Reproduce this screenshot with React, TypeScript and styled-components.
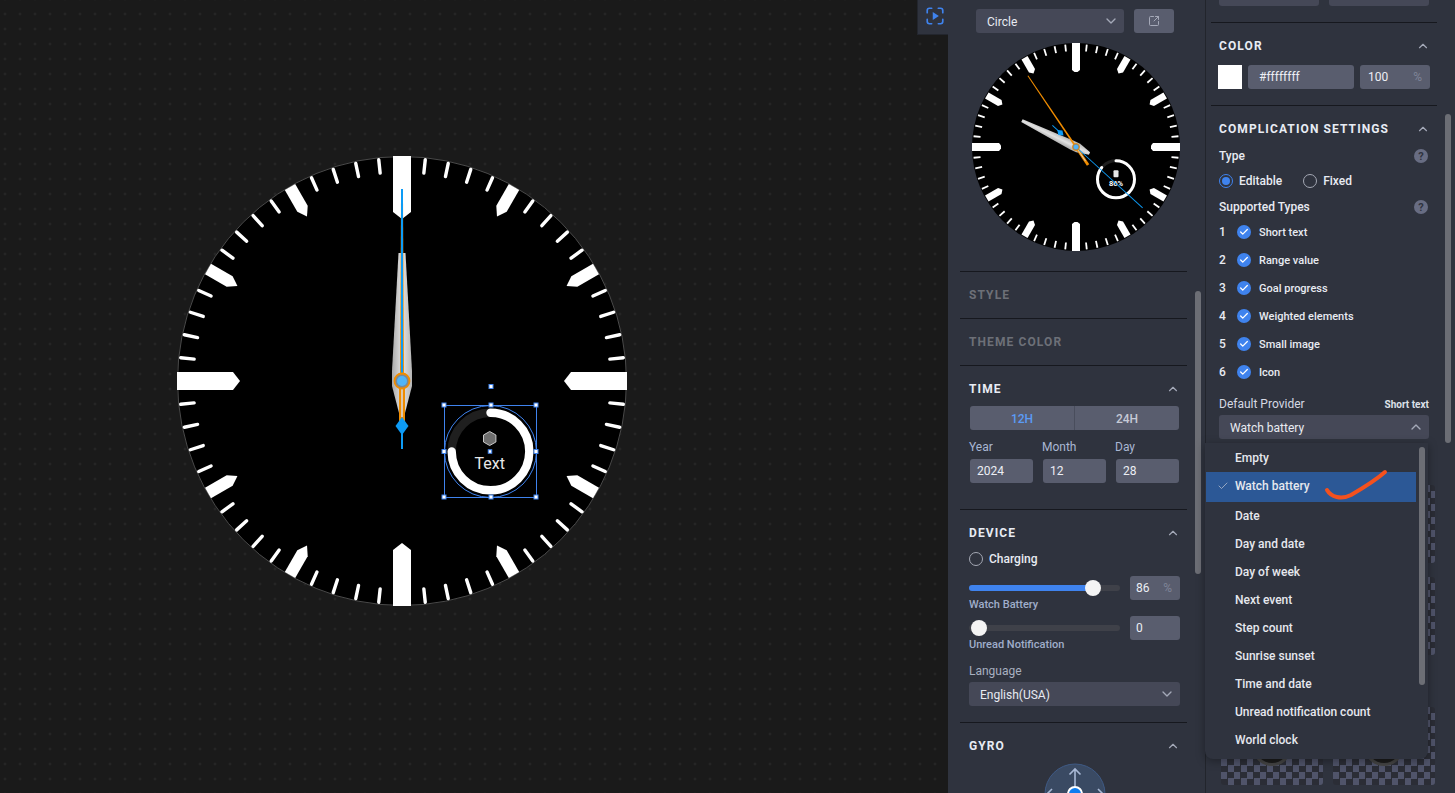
import React from "react";
import styled, { createGlobalStyle } from "styled-components";
import { Check, ChevronDown, ChevronUp, SquareArrowOutUpRight } from "lucide-react";

const PANEL = "#2f333e";
const LINE = "#16181e";
const FIELD = "#595d6e";
const SELECT = "#454857";
const BLUE = "#3f83ee";

const GlobalStyle = createGlobalStyle`
    html, body {
        margin: 0;
        padding: 0;
        background: #1a1a1a;
    }
    * {
        box-sizing: border-box;
    }
`;

const Page = styled.div`
    display: flex;
    width: 1455px;
    height: 793px;
    overflow: hidden;
    font-family: Roboto, "Liberation Sans", sans-serif;
    font-size: 12px;
    color: #e8ebf2;
`;

const Canvas = styled.main`
    position: relative;
    flex: 0 0 948px;
    padding: 155px 0 0 176px;
    background-color: #1a1a1a;
    background-image: radial-gradient(circle, #2d2d2d 0.9px, transparent 1.2px);
    background-size: 15px 15px;
    background-position: -2.5px 6.5px;
`;

const PlayTab = styled.div`
    position: absolute;
    top: 0;
    right: 0;
    display: flex;
    align-items: center;
    justify-content: center;
    width: 31px;
    height: 35px;
    padding: 0 0 3px 3px;
    background: ${PANEL};
    border-left: 1px solid #23262e;
    border-bottom: 1px solid #23262e;
`;

const Panel = styled.aside<{ $width: number; $border?: boolean }>`
    position: relative;
    flex: 0 0 ${(p) => p.$width}px;
    height: 793px;
    background: ${PANEL};
    border-right: ${(p) => (p.$border ? "1px solid #22252c" : "none")};
`;

const ScrollThumb = styled.div<{ $left: number; $top: number; $height: number }>`
    position: absolute;
    left: ${(p) => p.$left}px;
    top: ${(p) => p.$top}px;
    width: 6px;
    height: ${(p) => p.$height}px;
    border-radius: 3px;
    background: #6c6e75;
`;

const PresetRow = styled.div`
    display: flex;
    gap: 10px;
    padding: 9px 0 0 28px;
`;

const Select = styled.div<{ $width: number; $inset?: number }>`
    display: flex;
    align-items: center;
    justify-content: space-between;
    width: ${(p) => p.$width}px;
    height: 24px;
    padding: 2px 5px 0 ${(p) => p.$inset ?? 11}px;
    border-radius: 3px;
    background: ${SELECT};
    color: #e8ebf2;
    svg {
        margin-top: -2px;
    }
`;

const IconButton = styled.div`
    display: flex;
    align-items: center;
    justify-content: center;
    width: 40px;
    height: 24px;
    border-radius: 3px;
    background: ${FIELD};
    color: #a5a9b8;
`;

const DialSvg = styled.svg<{ $size: number }>`
    display: block;
    width: ${(p) => p.$size}px;
    height: ${(p) => p.$size}px;
`;

const PreviewSlot = styled.div`
    margin: 9px 0 19px 23px;
`;

const Section = styled.section<{ $left: number; $right: number; $inner?: number; $bottom?: number }>`
    margin: 0 ${(p) => p.$right}px 0 ${(p) => p.$left}px;
    padding: 13px 7px ${(p) => p.$bottom ?? 15}px ${(p) => p.$inner ?? 9}px;
    border-top: 1px solid ${LINE};
`;

const SectionHead = styled.header<{ $muted?: boolean }>`
    display: flex;
    align-items: center;
    justify-content: space-between;
    height: 18px;
    padding-top: 2px;
    font-weight: 700;
    letter-spacing: 1.1px;
    color: ${(p) => (p.$muted ? "#6d7078" : "#e8ecf4")};
    svg {
        color: #a4a9b8;
    }
`;

const Segments = styled.div`
    display: flex;
    width: 209px;
    height: 24px;
    margin: 9px 0 0 1px;
    border-radius: 3px;
    overflow: hidden;
    background: ${FIELD};
`;

const Segment = styled.div<{ $active?: boolean }>`
    flex: 1;
    display: flex;
    align-items: center;
    justify-content: center;
    padding-top: 2px;
    font-weight: 500;
    color: ${(p) => (p.$active ? "#5b9bf5" : "#c6cad6")};
    & + & {
        border-left: 1px solid #494d5c;
    }
`;

const DateGrid = styled.div`
    display: grid;
    grid-template-columns: repeat(3, 63px);
    column-gap: 10px;
    margin: 8px 0 11px 1px;
`;

const FieldLabel = styled.label`
    display: block;
    height: 16px;
    margin: 1px 0 4px -1px;
    line-height: 16px;
    color: #a9b7d3;
`;

const Field = styled.div<{ $width?: number; $inset?: number }>`
    display: flex;
    align-items: center;
    justify-content: space-between;
    width: ${(p) => (p.$width ? `${p.$width}px` : "100%")};
    height: 24px;
    padding: 0 8px 0 ${(p) => p.$inset ?? 6}px;
    border-radius: 3px;
    background: ${FIELD};
    color: #eceef4;
`;

const Unit = styled.span`
    color: #7f8498;
`;

const RadioRow = styled.div<{ $top: number }>`
    display: flex;
    align-items: center;
    height: 18px;
    margin-top: ${(p) => p.$top}px;
`;

const Radio = styled.span<{ $on?: boolean; $left?: number }>`
    position: relative;
    flex: none;
    width: 14px;
    height: 14px;
    margin: 0 6px 0 ${(p) => p.$left ?? 0}px;
    border: 1px solid ${(p) => (p.$on ? BLUE : "#a4a8b4")};
    border-radius: 50%;
    &::after {
        content: "";
        display: ${(p) => (p.$on ? "block" : "none")};
        position: absolute;
        inset: 2px;
        border-radius: 50%;
        background: ${BLUE};
    }
`;

const StrongText = styled.span`
    font-weight: 500;
    color: #e8ebf2;
`;

const SliderRow = styled.div<{ $top: number }>`
    display: flex;
    justify-content: space-between;
    height: 40px;
    margin-top: ${(p) => p.$top}px;
`;

const SliderColumn = styled.div`
    width: 151px;
`;

const SliderTrack = styled.div`
    position: relative;
    height: 6px;
    margin: 9px 0 0;
    border-radius: 3px;
    background: #3f4149;
`;

const SliderFill = styled.div`
    height: 100%;
    border-radius: 3px;
    background: ${BLUE};
`;

const SliderThumb = styled.span`
    position: absolute;
    top: -5px;
    width: 16px;
    height: 16px;
    margin-left: -8px;
    border-radius: 50%;
    background: #f4f4f4;
`;

const SliderLabel = styled.div`
    height: 12px;
    margin-top: 8px;
    font-size: 11px;
    line-height: 12px;
    font-weight: 500;
    color: #a0aecb;
`;

const PlainLabel = styled.div<{ $top: number; $bottom: number }>`
    height: 16px;
    margin: ${(p) => p.$top}px 0 ${(p) => p.$bottom}px;
    line-height: 16px;
    color: #a8b0c0;
`;

const GyroSlot = styled.div`
    display: flex;
    justify-content: center;
    margin-top: 9px;
`;

const TopStubs = styled.div`
    display: flex;
    gap: 10px;
    height: 22px;
    padding-left: 13px;
`;

const Stub = styled.div`
    width: 100px;
    height: 6px;
    border-radius: 0 0 3px 3px;
    background: ${SELECT};
`;

const ColorRow = styled.div`
    display: flex;
    gap: 6px;
    margin: 11px 0 0 -1px;
`;

const Swatch = styled.div`
    width: 24px;
    height: 24px;
    background: #fff;
`;

const TitleRow = styled.div<{ $top: number }>`
    display: flex;
    align-items: center;
    justify-content: space-between;
    height: 18px;
    margin-top: ${(p) => p.$top}px;
    padding-right: 2px;
`;

const Help = styled.span`
    display: flex;
    align-items: center;
    justify-content: center;
    width: 14px;
    height: 14px;
    border-radius: 50%;
    background: #686d83;
    color: #2f333e;
    font-size: 11px;
    font-weight: 700;
`;

const TypeList = styled.ul`
    margin: 2px 0 0;
    padding: 0;
    list-style: none;
`;

const TypeRow = styled.li`
    display: flex;
    align-items: center;
    height: 28px;
    font-size: 11px;
    font-weight: 500;
`;

const TypeIndex = styled.span`
    width: 18px;
    font-size: 12px;
`;

const CheckDot = styled.span`
    display: flex;
    align-items: center;
    justify-content: center;
    width: 14px;
    height: 14px;
    margin-right: 8px;
    border-radius: 50%;
    background: ${BLUE};
    color: #fff;
`;

const ProviderHead = styled.div`
    display: flex;
    align-items: center;
    justify-content: space-between;
    height: 16px;
    margin: 10px 0 3px;
    padding-right: 1px;
    color: #d5d9e3;
`;

const ProviderHint = styled.span`
    font-size: 10px;
    font-weight: 700;
    color: #dde0e8;
`;

const ThumbRow = styled.div<{ $top: number }>`
    display: grid;
    grid-template-columns: repeat(2, 102px);
    column-gap: 10px;
    margin: ${(p) => p.$top}px 0 0 15px;
`;

const Thumb = styled.div`
    display: flex;
    align-items: center;
    justify-content: center;
    height: 78px;
    border-radius: 3px;
    background: repeating-conic-gradient(#2b2d36 0 25%, #50546a 0 50%) 0 0 / 13px 13px;
`;

const ThumbDial = styled.div`
    width: 40px;
    height: 40px;
    border-radius: 50%;
    background: #1c1c1c;
    border: 3px solid #454545;
`;

const Menu = styled.div`
    position: absolute;
    left: -1px;
    top: 443px;
    width: 223px;
    padding: 0 0 6px 1px;
    border-radius: 0 0 8px 8px;
    background: ${PANEL};
    box-shadow: 0 2px 10px rgba(0, 0, 0, 0.35);
`;

const MenuItem = styled.div<{ $selected?: boolean }>`
    display: flex;
    align-items: center;
    gap: 6px;
    width: 210px;
    height: ${(p) => (p.$selected ? 30 : 28)}px;
    margin: ${(p) => (p.$selected ? "1px 0 -1px" : "0")};
    padding: ${(p) => (p.$selected ? "0 0 2px 11px" : "2px 0 0 29px")};
    background: ${(p) => (p.$selected ? "#2c5896" : "transparent")};
    font-weight: 500;
    color: #e6e8ee;
    svg {
        color: #b8c0d0;
    }
`;

const Scribble = styled.svg`
    position: absolute;
    left: 100px;
    top: 20px;
    width: 90px;
    height: 45px;
`;

const HOURS = [0, 30, 60, 90, 120, 150, 180, 210, 240, 270, 300, 330];
const MINUTES = Array.from({ length: 60 }, (_, i) => i * 6).filter((a) => a % 30 !== 0);

const Hands: React.FC<{
    c: number;
    scale: number;
    hour: number;
    minute: number;
    second: number;
    id: string;
}> = ({ c, scale, hour, minute, second, id }) => (
    <g transform={`translate(${c} ${c}) scale(${scale})`}>
        <defs>
            <linearGradient id={id} x1="0" x2="1" y1="0" y2="0">
                <stop offset="0" stopColor="#a9a9a9" />
                <stop offset="0.5" stopColor="#e2e2e2" />
                <stop offset="1" stopColor="#b5b5b5" />
            </linearGradient>
        </defs>
        <polygon
            transform={`rotate(${hour})`}
            points="-3.5,-128 3.5,-128 10,-10 10,5 3,32 -3,32 -10,5 -10,-10"
            fill={`url(#${id})`}
        />
        <g transform={`rotate(${minute})`}>
            <polygon points="-1,-183 1,-183 2,0 -2,0" fill="#f08c00" />
            <rect x="-3" y="0" width="6" height="46" fill="#f08c00" />
        </g>
        <g transform={`rotate(${second})`}>
            <rect x="-1" y="-192" width="2" height="192" fill="#0d9bf5" />
            <rect x="-1" y="38" width="2" height="30" fill="#0d9bf5" />
            <polygon points="0,36 6.5,45 0,54 -6.5,45" fill="#0d9bf5" />
        </g>
        <rect transform={`rotate(${minute})`} x="-0.8" y="6" width="1.6" height="30" fill="#d8d8d8" />
        <circle r="7.5" fill="#7d8890" stroke="#f08c00" strokeWidth="1.8" />
        <circle r="5" fill="#4fb4f8" />
    </g>
);

const Ring: React.FC<{
    x: number;
    y: number;
    r: number;
    width: number;
    percent: number;
}> = ({ x, y, r, width, percent }) => (
    <g transform={`rotate(-90 ${x} ${y})`}>
        <circle cx={x} cy={y} r={r} fill="none" stroke="#1f1f1f" strokeWidth={width} />
        <circle
            cx={x}
            cy={y}
            r={r}
            fill="none"
            stroke="#fff"
            strokeWidth={width}
            strokeLinecap="round"
            pathLength={100}
            strokeDasharray={`${percent} 100`}
        />
    </g>
);

const Handle: React.FC<{ x: number; y: number; size?: number }> = ({ x, y, size = 4 }) => (
    <rect x={x - size / 2} y={y - size / 2} width={size} height={size} fill="#fff" stroke={BLUE} strokeWidth="1" />
);

const MainDial = () => {
    const c = 226;
    const cx = c + 88.5;
    const cy = c + 70.5;
    const half = 46;
    const hx = cx - 0.8;
    return (
        <DialSvg $size={452} viewBox="0 0 452 452">
            <circle cx={c} cy={c} r={224.5} fill="#000" stroke="#4a4a4a" strokeWidth="1" />
            {MINUTES.map((a) => (
                <line
                    key={a}
                    transform={`rotate(${a} ${c} ${c})`}
                    x1={c}
                    x2={c}
                    y1={c - 222.5}
                    y2={c - 209}
                    stroke="#fff"
                    strokeWidth="3.4"
                    strokeLinecap="round"
                />
            ))}
            {HOURS.map((a) =>
                a % 90 === 0 ? (
                    <polygon
                        key={a}
                        transform={`rotate(${a} ${c} ${c})`}
                        points={`${c - 9},${c - 225} ${c + 9},${c - 225} ${c + 9},${c - 169} ${c},${c - 162} ${c - 9},${c - 169}`}
                        fill="#fff"
                    />
                ) : (
                    <polygon
                        key={a}
                        transform={`rotate(${a} ${c} ${c})`}
                        points={`${c - 6},${c - 224} ${c + 6},${c - 224} ${c + 6},${c - 199} ${c},${c - 190} ${c - 6},${c - 199}`}
                        fill="#fff"
                    />
                )
            )}
            <Hands c={c} scale={1} hour={0} minute={0} second={0} id="main-hand" />
            <Ring x={cx} y={cy} r={38.8} width={8.4} percent={75} />
            <polygon
                points={`${hx},${cy - 20} ${hx + 6.2},${cy - 16.5} ${hx + 6.2},${cy - 9.5} ${hx},${cy - 6} ${hx - 6.2},${cy - 9.5} ${hx - 6.2},${cy - 16.5}`}
                fill="#6e6e6e"
                stroke="#c9c9c9"
            />
            <text x={hx} y={cy + 17.5} textAnchor="middle" fontSize="16" fill="#e8e8e8" fontFamily="Roboto, sans-serif">
                Text
            </text>
            <circle cx={cx} cy={cy} r={half} fill="none" stroke={BLUE} strokeWidth="1" />
            <rect x={cx - half} y={cy - half} width={half * 2} height={half * 2} fill="none" stroke={BLUE} strokeWidth="1" />
            <Handle x={cx - half - 0.5} y={cy - half - 0.5} />
            <Handle x={cx + 0.5} y={cy - half - 0.5} />
            <Handle x={cx + half - 0.5} y={cy - half - 0.5} />
            <Handle x={cx - half - 0.5} y={cy} />
            <Handle x={cx + half - 0.5} y={cy} />
            <Handle x={cx - half - 0.5} y={cy + half - 0.5} />
            <Handle x={cx + 0.5} y={cy + half - 0.5} />
            <Handle x={cx + half - 0.5} y={cy + half - 0.5} />
            <Handle x={cx + 0.5} y={cy - 65} />
            <Handle x={cx - 0.5} y={cy} size={3.5} />
        </DialSvg>
    );
};

const PreviewDial = () => {
    const c = 105;
    const cx = c + 40;
    const cy = c + 32.3;
    return (
        <DialSvg $size={210} viewBox="0 0 210 210">
            <circle cx={c} cy={c} r={104} fill="#000" />
            {MINUTES.map((a) => (
                <line
                    key={a}
                    transform={`rotate(${a} ${c} ${c})`}
                    x1={c}
                    x2={c}
                    y1={c - 103}
                    y2={c - 96}
                    stroke="#fff"
                    strokeWidth="1.8"
                />
            ))}
            {HOURS.map((a) =>
                a % 90 === 0 ? (
                    <polygon
                        key={a}
                        transform={`rotate(${a} ${c} ${c})`}
                        points={`${c - 4},${c - 104} ${c + 4},${c - 104} ${c + 4},${c - 77} ${c + 1.5},${c - 75} ${c - 1.5},${c - 75} ${c - 4},${c - 77}`}
                        fill="#fff"
                    />
                ) : (
                    <polygon
                        key={a}
                        transform={`rotate(${a} ${c} ${c})`}
                        points={`${c - 3.5},${c - 103} ${c + 3.5},${c - 103} ${c + 3.5},${c - 88} ${c},${c - 85} ${c - 3.5},${c - 88}`}
                        fill="#fff"
                    />
                )
            )}
            <Ring x={cx} y={cy} r={18.5} width={3} percent={86} />
            <rect x={cx - 2.5} y={cy - 9} width={5} height={7} rx={1} fill="#e8e8e8" />
            <text x={cx} y={cy + 7} textAnchor="middle" fontSize="7.5" fontWeight="700" fill="#fff" fontFamily="Roboto, sans-serif">
                86%
            </text>
            <Hands c={c} scale={0.47} hour={-64} minute={-34} second={132.4} id="preview-hand" />
        </DialSvg>
    );
};

const PlayIcon = () => (
    <svg width="20" height="20" viewBox="0 0 18 18" fill="none" stroke={BLUE} strokeWidth="1.5" strokeLinecap="round">
        <path d="M2 6V4a2 2 0 0 1 2-2h2M12 2h2a2 2 0 0 1 2 2v2M16 12v2a2 2 0 0 1-2 2h-2M6 16H4a2 2 0 0 1-2-2v-2" />
        <path d="M7 5.5v7l5.5-3.5z" fill={BLUE} stroke="none" />
    </svg>
);

const GyroIcon = () => (
    <svg width="62" height="62" viewBox="0 0 62 62" fill="none">
        <circle cx="31" cy="31" r="30" fill="#3a4a63" stroke="#3f5a85" />
        <g stroke="#a9b9d6" strokeWidth="1.6">
            <path d="M31 23V6M25.5 11.5 31 6l5.5 5.5" />
            <path d="M14 31H3M8 26l-5 5 5 5" />
            <path d="M48 31h11M54 26l5 5-5 5" />
        </g>
        <circle cx="31" cy="31" r="7" fill="#0d7df0" stroke="#fff" strokeWidth="2" />
    </svg>
);

const HEADER_CHEVRON = <ChevronUp size={14} strokeWidth={2} />;

const Head: React.FC<{ title: string; muted?: boolean }> = ({ title, muted }) => (
    <SectionHead $muted={muted}>
        {title}
        {!muted && HEADER_CHEVRON}
    </SectionHead>
);

const SUPPORTED = ["Short text", "Range value", "Goal progress", "Weighted elements", "Small image", "Icon"];
const PROVIDERS = [
    "Empty",
    "Watch battery",
    "Date",
    "Day and date",
    "Day of week",
    "Next event",
    "Step count",
    "Sunrise sunset",
    "Time and date",
    "Unread notification count",
    "World clock",
];
const DATE_PARTS = [
    ["Year", "2024"],
    ["Month", "12"],
    ["Day", "28"],
];

const LeftPanel = () => (
    <Panel $width={258} $border>
        <PresetRow>
            <Select $width={148}>
                Circle
                <ChevronDown size={16} color="#a4a9b8" />
            </Select>
            <IconButton>
                <SquareArrowOutUpRight size={12} />
            </IconButton>
        </PresetRow>
        <PreviewSlot>
            <PreviewDial />
        </PreviewSlot>
        <Section $left={12} $right={18}>
            <Head title="STYLE" muted />
        </Section>
        <Section $left={12} $right={18}>
            <Head title="THEME COLOR" muted />
        </Section>
        <Section $left={12} $right={18} $bottom={15}>
            <Head title="TIME" />
            <Segments>
                <Segment $active>12H</Segment>
                <Segment>24H</Segment>
            </Segments>
            <DateGrid>
                {DATE_PARTS.map(([label, value]) => (
                    <div key={label}>
                        <FieldLabel>{label}</FieldLabel>
                        <Field $inset={7}>{value}</Field>
                    </div>
                ))}
            </DateGrid>
        </Section>
        <Section $left={12} $right={18} $bottom={16}>
            <Head title="DEVICE" />
            <RadioRow $top={9}>
                <Radio />
                <StrongText>Charging</StrongText>
            </RadioRow>
            <SliderRow $top={8}>
                <SliderColumn>
                    <SliderTrack>
                        <SliderFill style={{ width: "82%" }} />
                        <SliderThumb style={{ left: "82%" }} />
                    </SliderTrack>
                    <SliderLabel>Watch Battery</SliderLabel>
                </SliderColumn>
                <Field $width={50}>
                    86
                    <Unit>%</Unit>
                </Field>
            </SliderRow>
            <SliderRow $top={0}>
                <SliderColumn>
                    <SliderTrack>
                        <SliderThumb style={{ left: "6.6%" }} />
                    </SliderTrack>
                    <SliderLabel>Unread Notification</SliderLabel>
                </SliderColumn>
                <Field $width={50}>0</Field>
            </SliderRow>
            <PlainLabel $top={7} $bottom={3}>
                Language
            </PlainLabel>
            <Select $width={211}>
                English(USA)
                <ChevronDown size={16} color="#a4a9b8" />
            </Select>
        </Section>
        <Section $left={12} $right={18}>
            <Head title="GYRO" />
            <GyroSlot>
                <GyroIcon />
            </GyroSlot>
        </Section>
        <ScrollThumb $left={247} $top={291} $height={283} />
    </Panel>
);

const RightPanel = () => (
    <Panel $width={249}>
        <TopStubs>
            <Stub />
            <Stub />
        </TopStubs>
        <Section $left={5} $right={18} $inner={8} $bottom={16}>
            <Head title="COLOR" />
            <ColorRow>
                <Swatch />
                <Field $width={106} $inset={11}>
                    #ffffffff
                </Field>
                <Field $width={70} $inset={8}>
                    100
                    <Unit>%</Unit>
                </Field>
            </ColorRow>
        </Section>
        <Section $left={5} $right={18} $inner={8} $bottom={0}>
            <Head title="COMPLICATION SETTINGS" />
            <TitleRow $top={10}>
                <StrongText>Type</StrongText>
                <Help>?</Help>
            </TitleRow>
            <RadioRow $top={7}>
                <Radio $on />
                <StrongText>Editable</StrongText>
                <Radio $left={21} />
                <StrongText>Fixed</StrongText>
            </RadioRow>
            <TitleRow $top={8}>
                <StrongText>Supported Types</StrongText>
                <Help>?</Help>
            </TitleRow>
            <TypeList>
                {SUPPORTED.map((name, i) => (
                    <TypeRow key={name}>
                        <TypeIndex>{i + 1}</TypeIndex>
                        <CheckDot>
                            <Check size={10} strokeWidth={3} />
                        </CheckDot>
                        {name}
                    </TypeRow>
                ))}
            </TypeList>
            <ProviderHead>
                Default Provider
                <ProviderHint>Short text</ProviderHint>
            </ProviderHead>
            <Select $width={210}>
                Watch battery
                <ChevronUp size={16} color="#a4a9b8" />
            </Select>
        </Section>
        <ThumbRow $top={46}>
            <Thumb />
            <Thumb />
        </ThumbRow>
        <ThumbRow $top={14}>
            <Thumb />
            <Thumb />
        </ThumbRow>
        <ThumbRow $top={52}>
            <Thumb>
                <ThumbDial />
            </Thumb>
            <Thumb>
                <ThumbDial />
            </Thumb>
        </ThumbRow>
        <Menu>
            {PROVIDERS.map((name) => {
                const selected = name === "Watch battery";
                return (
                    <MenuItem key={name} $selected={selected}>
                        {selected && <Check size={12} strokeWidth={1.5} />}
                        {name}
                    </MenuItem>
                );
            })}
            <ScrollThumb $left={214} $top={4} $height={238} />
            <Scribble viewBox="0 0 90 45" fill="none">
                <path
                    d="M22 27C26 34 36 37 46 32C58 25 71 17 80 9"
                    stroke="#f4511e"
                    strokeWidth="4"
                    strokeLinecap="round"
                />
            </Scribble>
        </Menu>
        <ScrollThumb $left={239} $top={114} $height={329} />
    </Panel>
);

export default function App() {
    return (
        <>
            <GlobalStyle />
            <Page>
                <Canvas>
                    <MainDial />
                    <PlayTab>
                        <PlayIcon />
                    </PlayTab>
                </Canvas>
                <LeftPanel />
                <RightPanel />
            </Page>
        </>
    );
}
